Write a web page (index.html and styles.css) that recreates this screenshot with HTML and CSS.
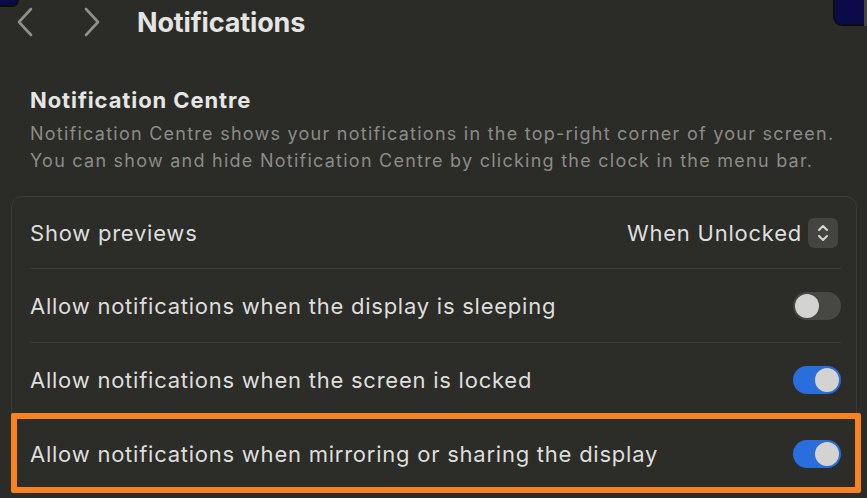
FILE: index.html
```html
<!DOCTYPE html>
<html lang="en">
<head>
<meta charset="utf-8">
<title>Notifications</title>
<link rel="stylesheet" href="styles.css">
</head>
<body>
<div class="corner corner-left"></div>
<div class="corner corner-right"></div>
<div class="window">
  <header class="toolbar">
    <button class="nav-btn" aria-label="Back">
      <svg width="18" height="30" viewBox="0 0 18 30"><path d="M15 2 L3 15 L15 28" fill="none" stroke="#8f8f8b" stroke-width="2.6" stroke-linecap="round" stroke-linejoin="round"/></svg>
    </button>
    <button class="nav-btn fwd" aria-label="Forward">
      <svg width="18" height="30" viewBox="0 0 18 30"><path d="M3 2 L15 15 L3 28" fill="none" stroke="#8f8f8b" stroke-width="2.6" stroke-linecap="round" stroke-linejoin="round"/></svg>
    </button>
    <h1 class="title">Notifications</h1>
  </header>

  <section class="intro">
    <h2 class="section-title">Notification Centre</h2>
    <p class="section-desc">Notification Centre shows your notifications in the top-right corner of your screen.<br>You can show and hide Notification Centre by clicking the clock in the menu bar.</p>
  </section>

  <div class="card">
    <div class="row">
      <span class="label">Show previews</span>
      <div class="popup">
        <span class="popup-value">When Unlocked</span>
        <span class="stepper">
          <svg width="14" height="22" viewBox="0 0 14 22"><path d="M3 8 L7 4 L11 8" fill="none" stroke="#d6d6d4" stroke-width="2" stroke-linecap="round" stroke-linejoin="round"/><path d="M3 14 L7 18 L11 14" fill="none" stroke="#d6d6d4" stroke-width="2" stroke-linecap="round" stroke-linejoin="round"/></svg>
        </span>
      </div>
    </div>
    <div class="row">
      <span class="label">Allow notifications when the display is sleeping</span>
      <span class="toggle"><span class="knob"></span></span>
    </div>
    <div class="row">
      <span class="label">Allow notifications when the screen is locked</span>
      <span class="toggle on"><span class="knob"></span></span>
    </div>
    <div class="row highlight">
      <span class="label">Allow notifications when mirroring or sharing the display</span>
      <span class="toggle on"><span class="knob"></span></span>
    </div>
  </div>
</div>
</body>
</html>
```

FILE: styles.css
```css
* { box-sizing: border-box; }

html, body {
  margin: 0;
  padding: 0;
}

body {
  width: 867px;
  height: 498px;
  overflow: hidden;
  background: #2b2b27;
  font-family: "Inter", "Noto Sans", sans-serif;
  color: #e0e0de;
  position: relative;
}

.corner {
  position: absolute;
  top: 0;
  background: #0b0b4a;
  border: 2px solid #0d0d0d;
  border-top: none;
}
.corner-left {
  left: -2px;
  width: 21px;
  height: 7px;
  border-left: none;
  border-radius: 0 0 9px 0;
}
.corner-right {
  right: 3px;
  width: 31px;
  height: 26px;
  border-right: none;
  border-radius: 0 0 0 9px;
  box-shadow: 3px 0 0 #45453f;
}

.window {
  display: flex;
  flex-direction: column;
}

.toolbar {
  display: flex;
  align-items: center;
  height: 44px;
  padding-left: 16px;
}

.nav-btn {
  background: none;
  border: none;
  padding: 0;
  margin: 0;
  width: 18px;
  height: 30px;
  display: flex;
}
.nav-btn.fwd {
  margin-left: 49px;
}

.title {
  margin: 1px 0 0 36px;
  font-size: 27px;
  font-weight: 700;
  letter-spacing: -0.15px;
  color: #e4e4e2;
}

.intro {
  padding: 43px 30px 0 30px;
}

.section-title {
  margin: 0;
  font-size: 22px;
  font-weight: 700;
  line-height: 26px;
  color: #e6e6e4;
  letter-spacing: 0.9px;
}

.section-desc {
  margin: 7px 0 0 0;
  font-size: 18px;
  line-height: 27px;
  color: #8c8c88;
  letter-spacing: 1.25px;
  white-space: nowrap;
}

.card {
  margin: 22px 10px 0 11px;
  border: 1px solid #3b3b37;
  border-radius: 11px;
  background: #2c2c28;
  display: flex;
  flex-direction: column;
}

.row {
  height: 74px;
  margin: 0 15px 0 18px;
  display: flex;
  align-items: center;
  justify-content: space-between;
  border-bottom: 1px solid #3a3a36;
}
.row:first-child { height: 72px; }
.row:last-child { border-bottom: none; }

.label {
  font-size: 22px;
  color: #dededc;
  letter-spacing: 0.76px;
  white-space: nowrap;
}

.popup {
  display: flex;
  align-items: center;
  gap: 6px;
}
.popup-value {
  font-size: 22px;
  color: #dededc;
  letter-spacing: 0.76px;
}
.stepper {
  width: 30px;
  height: 30px;
  border-radius: 6px;
  background: #45453f;
  display: flex;
  align-items: center;
  justify-content: center;
  margin-right: 3px;
}

.toggle {
  width: 48px;
  height: 28px;
  border-radius: 14px;
  background: #474743;
  display: flex;
  align-items: center;
  padding: 0 2px;
}
.toggle .knob {
  width: 24px;
  height: 24px;
  border-radius: 50%;
  background: #d3d3d1;
}
.toggle.on {
  background: #2a6ddc;
  justify-content: flex-end;
}

.highlight {
  position: relative;
}
.highlight::after {
  content: "";
  position: absolute;
  left: -19px;
  right: -20px;
  top: -4px;
  bottom: -2px;
  border: 6px solid #f7821f;
  border-radius: 2px;
  pointer-events: none;
}
```
